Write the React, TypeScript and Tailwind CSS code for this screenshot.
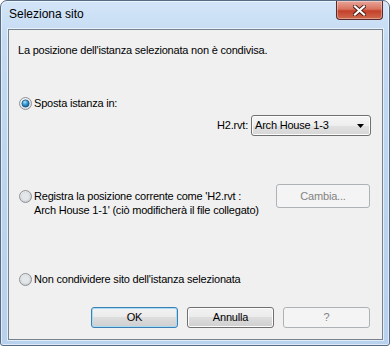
import React from 'react';

const font = "font-['Liberation_Sans',Arial,sans-serif]";

function Radio({ checked }: { checked?: boolean }) {
  return (
    <svg width="13" height="13" viewBox="0 0 13 13" className="shrink-0">
      <defs>
        <radialGradient id={checked ? 'rbgOn' : 'rbgOff'} cx="0.4" cy="0.35" r="0.7">
          <stop offset="0" stopColor="#fdfdfd" />
          <stop offset="1" stopColor={checked ? '#d9dde2' : '#c6cbd1'} />
        </radialGradient>
        <radialGradient id="rdot" cx="0.4" cy="0.3" r="0.75">
          <stop offset="0" stopColor="#a9e2fb" />
          <stop offset="0.45" stopColor="#3b9fd6" />
          <stop offset="1" stopColor="#0d4f8b" />
        </radialGradient>
      </defs>
      <circle cx="6.5" cy="6.5" r="6" fill={`url(#${checked ? 'rbgOn' : 'rbgOff'})`} stroke="#8f9194" strokeWidth="1" />
      {checked ? (
        <circle cx="6.5" cy="6.5" r="3.6" fill="url(#rdot)" stroke="#1c4f7e" strokeWidth="0.8" />
      ) : (
        <circle cx="6.5" cy="6.5" r="4.2" fill="#e4e7ea" stroke="#d2d6da" strokeWidth="0.6" />
      )}
    </svg>
  );
}

function Button({ label, isDefault, disabled, width }: { label: string; isDefault?: boolean; disabled?: boolean; width: string }) {
  if (disabled) {
    return (
      <div className={`${width} flex h-[21px] items-center justify-center rounded-[3px] border border-[#adb2b5] bg-[#f4f4f4] text-[#838383]`}>
        {label}
      </div>
    );
  }
  return (
    <div
      className={`${width} flex h-[21px] items-center justify-center rounded-[3px] border bg-[linear-gradient(#f2f2f2_0%,#ebebeb_50%,#dddddd_50%,#cfcfcf_100%)] text-black ${
        isDefault
          ? 'border-[#3c7fb1] shadow-[inset_0_0_0_1px_#a8dcf6]'
          : 'border-[#707070] shadow-[inset_0_0_0_1px_#fcfcfc]'
      }`}
    >
      {label}
    </div>
  );
}

export default function App() {
  return (
    <div className={`h-[346px] w-[390px] bg-white ${font}`}>
      <div className="flex h-full w-full flex-col rounded-t-[7px] rounded-b-[3px] border border-[#566b84] bg-[linear-gradient(#d3e5f8_0%,#c3daf2_12%,#bcd4ee_60%,#b8d1ec_100%)] pr-[6px] pl-[7px] shadow-[inset_0_0_0_1px_rgba(255,255,255,0.55)]">
        <div className="flex h-[28px] items-start justify-between pl-[1px]">
          <span className="mt-[6px] text-[12px] leading-[15px] text-black">Seleziona sito</span>
          <div className="flex h-[19px] w-[47px] items-center justify-center rounded-b-[4px] border border-t-0 border-[#5a2a2a] bg-[linear-gradient(#e8a69a_0%,#d7735f_45%,#c4402a_55%,#cf6a4f_100%)] shadow-[inset_0_0_0_1px_rgba(255,255,255,0.35)]">
            <svg width="13" height="11" viewBox="0 0 13 11">
              <path d="M2 1.5 L11 9.5 M11 1.5 L2 9.5" stroke="#4a1e18" strokeWidth="4" strokeLinecap="square" />
              <path d="M2 1.5 L11 9.5 M11 1.5 L2 9.5" stroke="#ffffff" strokeWidth="2.2" strokeLinecap="square" />
            </svg>
          </div>
        </div>

        <div className="mb-[5px] flex flex-1 flex-col border border-[#76838f] bg-[#f0f0f0] text-[11px] tracking-[-0.2px] text-black shadow-[0_0_0_1px_rgba(255,255,255,0.6)]">
          <div className="pt-[13px] pl-[9px] leading-[15px]">La posizione dell'istanza selezionata non è condivisa.</div>

          <div className="mt-[38px] flex items-center gap-[2px] pl-[10px] leading-[15px]">
            <Radio checked />
            <span>Sposta istanza in:</span>
          </div>

          <div className="mt-[4px] flex items-center justify-end pr-[11px]">
            <span className="mr-[3px] leading-[15px]">H2.rvt:</span>
            <div className="flex h-[21px] w-[120px] items-center justify-between rounded-[3px] border border-[#707070] bg-[linear-gradient(#f6f6f6_0%,#eeeeee_50%,#e2e2e2_50%,#d6d6d6_100%)] pr-[6px] pl-[3px] shadow-[inset_0_0_0_1px_#fcfcfc]">
              <span className="leading-[15px]">Arch House 1-3</span>
              <svg width="7" height="4" viewBox="0 0 7 4">
                <path d="M0 0 H7 L3.5 4 Z" fill="#000" />
              </svg>
            </div>
          </div>

          <div className="mt-[48px] flex items-start justify-between pr-[12px] pl-[10px]">
            <div className="mt-[5px] flex items-start gap-[2px] leading-[14px]">
              <div className="mt-[1px]">
                <Radio />
              </div>
              <span>
                Registra la posizione corrente come 'H2.rvt :
                <br />
                Arch House 1-1' (ciò modificherà il file collegato)
              </span>
            </div>
            <div className="flex h-[24px] w-[94px] items-center justify-center rounded-[3px] border border-[#adb2b5] bg-[#f4f4f4] text-[#838383]">
              Cambia...
            </div>
          </div>

          <div className="mt-[55px] flex items-center gap-[2px] pl-[10px] leading-[15px]">
            <Radio />
            <span>Non condividere sito dell'istanza selezionata</span>
          </div>

          <div className="mt-[20px] flex justify-end gap-[9px] pr-[12px]">
            <Button label="OK" isDefault width="w-[87px]" />
            <Button label="Annulla" width="w-[87px]" />
            <Button label="?" disabled width="w-[87px]" />
          </div>
        </div>
      </div>
    </div>
  );
}
